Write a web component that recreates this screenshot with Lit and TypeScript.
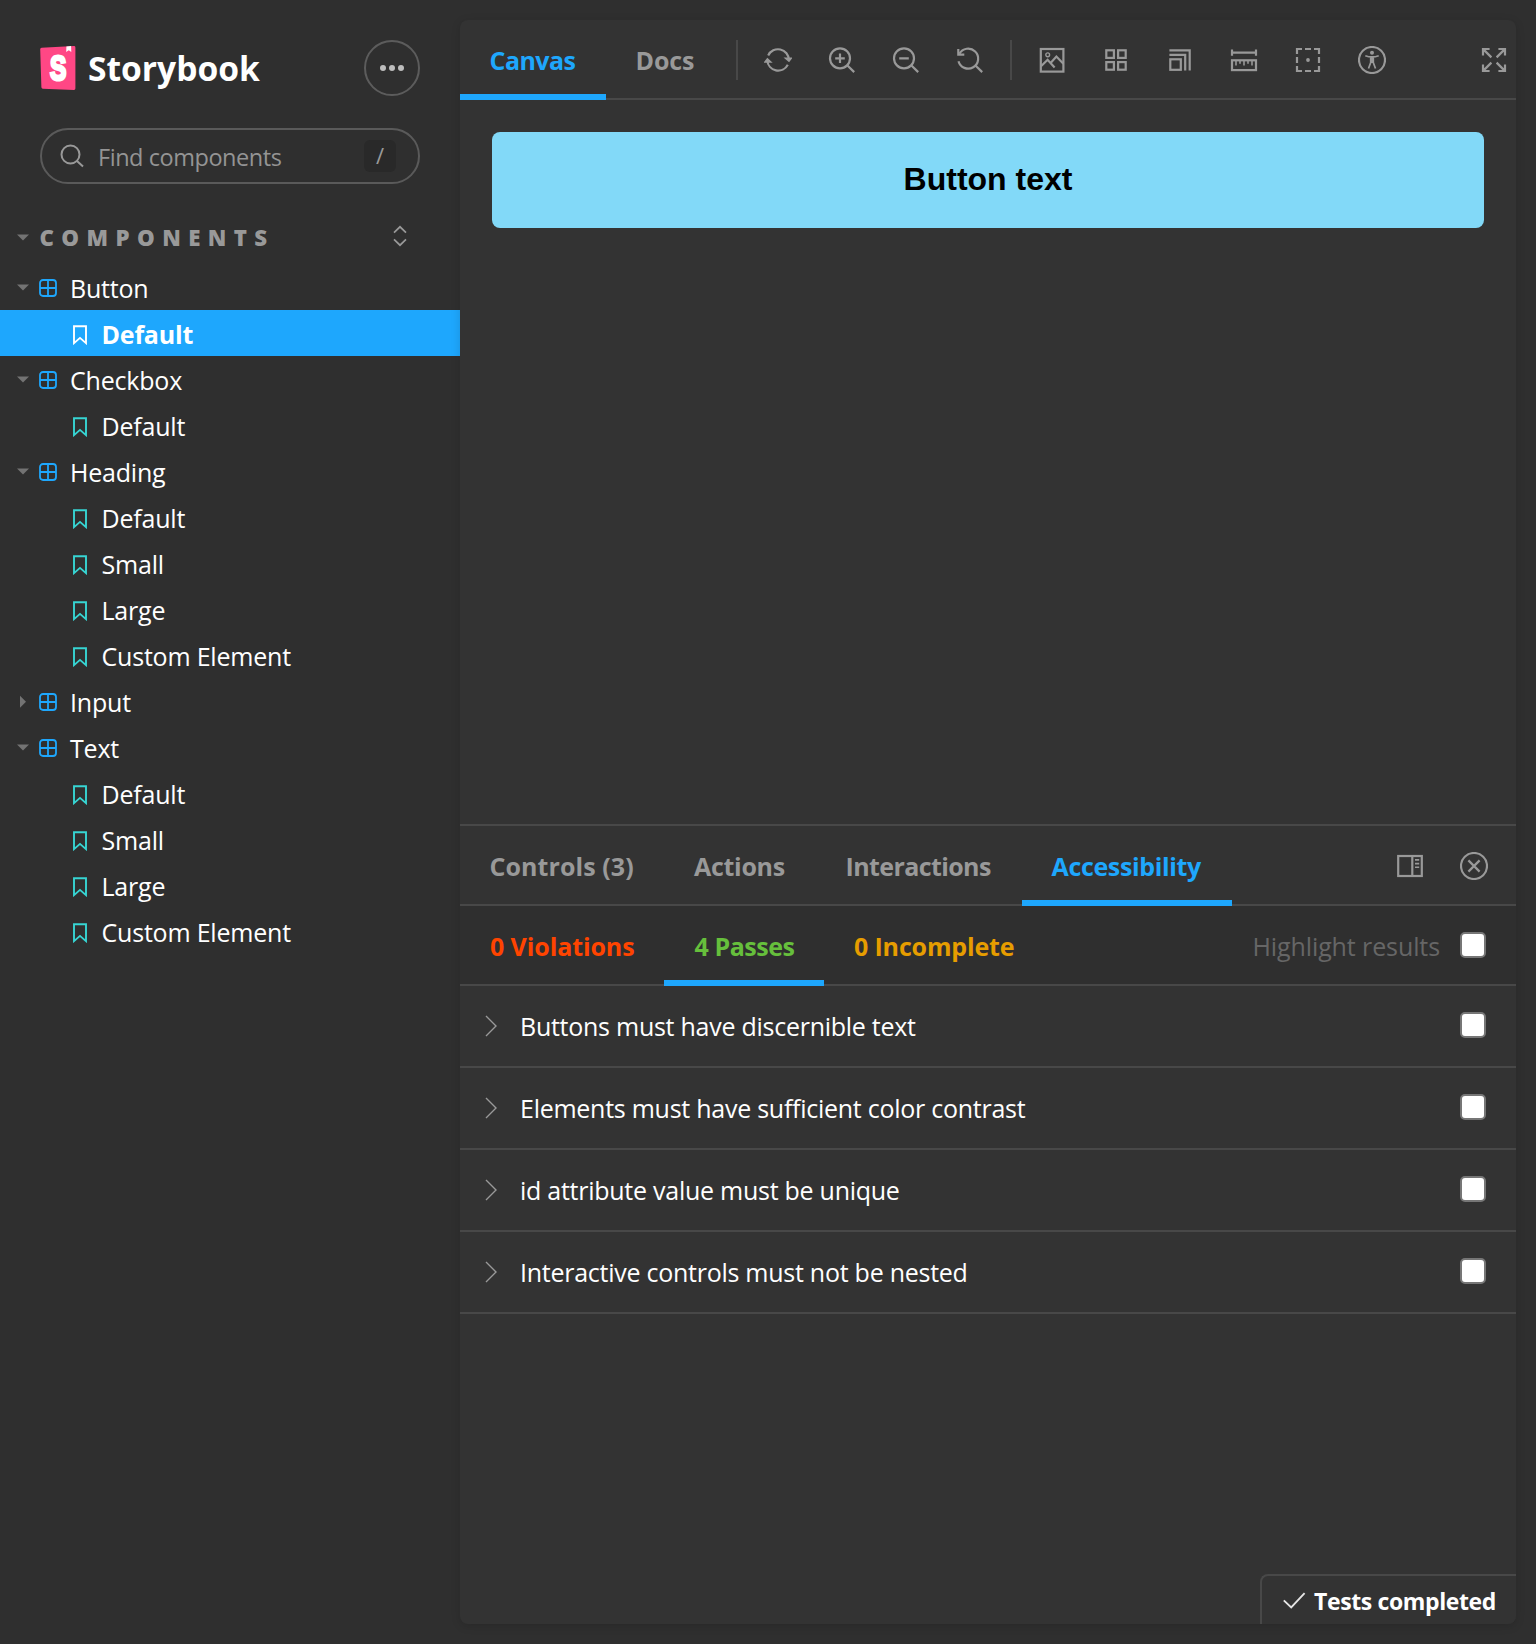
import { LitElement, html, css, svg } from "lit";
import { classMap } from "lit/directives/class-map.js";

type TreeNode = { label: string; open: boolean; stories: string[]; selected?: string };

const TREE: TreeNode[] = [
  { label: "Button", open: true, stories: ["Default"], selected: "Default" },
  { label: "Checkbox", open: true, stories: ["Default"] },
  { label: "Heading", open: true, stories: ["Default", "Small", "Large", "Custom Element"] },
  { label: "Input", open: false, stories: [] },
  { label: "Text", open: true, stories: ["Default", "Small", "Large", "Custom Element"] },
];

const RULES = [
  "Buttons must have discernible text",
  "Elements must have sufficient color contrast",
  "id attribute value must be unique",
  "Interactive controls must not be nested",
];

// Toolbar glyphs on a 28 x 28 grid
const ICONS: Record<string, unknown> = {
  sync: svg`<path d="M4.2 9.4A10.9 10.9 0 0 1 24.9 14"/><path d="M23.8 18.8A10.9 10.9 0 0 1 3.3 14.5"/><path d="M21.4 12.2h6l-2.4 3z" fill="currentColor" stroke-width="1.4"/><path d="M.9 16h6L3.4 12.8z" fill="currentColor" stroke-width="1.4"/>`,
  zoomIn: svg`<circle cx="12" cy="12.3" r="10"/><path d="M19.2 19.3l7 6.8M7.2 12.3h9.6M12 7.5v9.6"/>`,
  zoomOut: svg`<circle cx="12" cy="12.3" r="10"/><path d="M19.2 19.3l7 6.8M7.2 12.3h9.6"/>`,
  zoomReset: svg`<path d="M3.4 7.8A10 10 0 1 1 2.5 15.2"/><path d="M2.3 3v5.6h6"/><path d="M19.2 19.3l7 6.8"/>`,
  image: svg`<rect x="2.8" y="3" width="22.6" height="22.6"/><circle cx="9.7" cy="8.8" r="1.9" stroke-width="1.4"/><path d="M3 20.2l6.6-6.4 7 7.6M12.8 16.8l5.6-6.2 7 7.2"/>`,
  grid: svg`<rect x="4.3" y="4.3" width="7.6" height="7.6"/><rect x="16.1" y="4.3" width="7.6" height="7.6"/><rect x="4.3" y="16.1" width="7.6" height="7.6"/><rect x="16.1" y="16.1" width="7.6" height="7.6"/>`,
  layers: svg`<rect x="4.3" y="13.3" width="10.5" height="10.5"/><path d="M3.4 8.8h15.8v15.8M3.4 4.4h20.3v20.2"/>`,
  ruler: svg`<rect x="2" y="14.3" width="24" height="9.8"/><path d="M2 6.6h24M2 3.4v6.4M26 3.4v6.4"/><path d="M6 15v4.4M10 15v2.8M14 15v4.4M18 15v2.8M22 15v4.4" stroke-width="1.6"/>`,
  outline: svg`<path d="M3 8V3h5M20 3h5v5M25 20v5h-5M8 25H3v-5M11 3h6M11 25h6M3 11v6M25 11v6"/><circle cx="14" cy="14" r="1.9" fill="currentColor" stroke="none"/>`,
  a11y: svg`<circle cx="14" cy="14" r="13"/><circle cx="14" cy="6.8" r="2" fill="currentColor" stroke="none"/><path d="M7.3 9.7q6.7 2.5 13.4 0M12.7 11v5.5l-2.2 6M15.3 11v5.5l2.2 6" stroke-width="1.7"/><path d="M12.6 11h2.8v6h-2.8z" fill="currentColor" stroke="none"/>`,
  expand: svg`<path d="M3 9.6V3h6.6M18.4 3H25v6.6M25 18.4V25h-6.6M9.6 25H3v-6.6M3.4 3.4l8 8M24.6 3.4l-8 8M24.6 24.6l-8-8M3.4 24.6l8-8"/>`,
  sidebarRight: svg`<rect x="2.2" y="4" width="23.6" height="20"/><path d="M16.3 4v20"/><path d="M19 7.9h4.2M19 11.6h4.2M19 15.3h4.2" stroke-width="1.6"/>`,
  close: svg`<circle cx="14" cy="14" r="13"/><path d="M8.4 8.4l11.2 11.2M19.6 8.4L8.4 19.6"/>`,
};

const icon = (name: string) =>
  html`<svg class="glyph" viewBox="0 0 28 28" fill="none" stroke="currentColor" stroke-width="2.2">${ICONS[name]}</svg>`;

class SbSidebar extends LitElement {
  static styles = css`
    :host { display: block; width: 460px; flex: none; box-sizing: border-box; padding-top: 40px; color: #fff; }
    .top { display: flex; align-items: center; justify-content: space-between; height: 56px; padding: 0 40px; }
    .brand { display: flex; align-items: center; gap: 12px; font-size: 33.6px; font-weight: 700; line-height: 56px; }
    .mark { width: 36px; height: 46px; display: block; }
    .word { padding-bottom: 1px; }
    .more { box-sizing: border-box; width: 56px; height: 56px; border: 2px solid #5c5c5c; border-radius: 50%; display: flex; align-items: center; justify-content: center; gap: 2.2px; }
    .more i { width: 6.8px; height: 6.8px; border-radius: 50%; background: #bdbdbd; }
    .search { box-sizing: border-box; height: 56px; margin: 32px 40px 0; padding: 0 22px 0 18px; border: 2px solid #5a5a5a; border-radius: 28px; display: flex; align-items: center; color: #999; }
    .search svg { width: 24px; height: 24px; display: block; }
    .hint { flex: 1; padding: 1px 0 0 14px; font-size: 23.5px; letter-spacing: -0.45px; color: #949494; }
    .key { width: 32px; height: 32px; border-radius: 6px; background: #292929; font-size: 22px; line-height: 31px; text-align: center; }
    .heading { display: flex; align-items: center; height: 40px; margin-top: 34px; padding: 0 52px 0 16px; color: #999; }
    .heading span { flex: 1; padding: 0 0 0 9.5px; font-size: 22.3px; font-weight: 800; letter-spacing: 7.4px; line-height: 40px; }
    .updown { width: 16px; height: 22px; display: block; margin-top: -5px; }
    .tri { width: 14px; height: 14px; flex: none; display: block; margin-top: -1px; fill: #737373; }
    .tree { margin-top: 6px; }
    .row { box-sizing: border-box; height: 46px; padding: 3px 0 0 16px; display: flex; align-items: center; font-size: 25px; line-height: 43px; letter-spacing: -0.2px; }
    .comp { width: 18px; height: 18px; margin: -1px 13px 0 9px; display: block; color: #1ea7fd; }
    .story { padding-left: 73px; }
    .story svg { width: 14px; height: 20px; margin-right: 14.5px; display: block; color: #37d5d3; }
    .selected { background: #1ea7fd; font-weight: 700; }
    .selected svg { color: #fff; }
  `;

  private triangle(open: boolean) {
    return html`<svg class="tri" viewBox="0 0 14 14"><path d=${open ? "M1 3.5h12L7 9.5z" : "M4 .8v12l6-6z"} /></svg>`;
  }

  render() {
    return html`
      <div class="top">
        <div class="brand">
          <svg class="mark" viewBox="0 0 36 46">
            <path d="M1.6 2.8L34 1q1.4 0 1.4 1.4v41.2q0 1.4-1.4 1.4L2.8 43.7q-1.3-.1-1.4-1.4L.2 4.3q0-1.4 1.4-1.5z" fill="#ff4785" />
            <path d="M26.4 1.4l4.7-.3.2 6-2.5-1.8-2.6 1.7z" fill="#fff" />
            <text x="0" y="0" transform="translate(18.2 35.2) scale(.7 1)" text-anchor="middle" font-family="Liberation Sans, sans-serif" font-weight="700" font-size="35" fill="#fff" stroke="#fff" stroke-width="3">S</text>
          </svg>
          <span class="word">Storybook</span>
        </div>
        <div class="more"><i></i><i></i><i></i></div>
      </div>
      <div class="search">
        <svg viewBox="0 0 24 24" fill="none" stroke="currentColor" stroke-width="2"><circle cx="10.5" cy="10.5" r="9" /><path d="M17 17l6 5.6" /></svg>
        <span class="hint">Find components</span>
        <span class="key">/</span>
      </div>
      <div class="heading">
        ${this.triangle(true)}<span>COMPONENTS</span>
        <svg class="updown" viewBox="0 0 16 22" fill="none" stroke="currentColor" stroke-width="1.7"><path d="M2 7.6l6-5.8 6 5.8M2 14.4l6 5.8 6-5.8" /></svg>
      </div>
      <div class="tree">
        ${TREE.map((node) => html`
          <div class="row">
            ${this.triangle(node.open)}
            <svg class="comp" viewBox="0 0 18 18" fill="none" stroke="currentColor" stroke-width="1.8"><rect x="1" y="1" width="16" height="16" rx="3" /><path d="M9 1v16M1 9h16" /></svg>
            <span>${node.label}</span>
          </div>
          ${node.stories.map((story) => html`
            <div class=${classMap({ row: true, story: true, selected: node.selected === story })}>
              <svg viewBox="0 0 14 20" fill="none" stroke="currentColor" stroke-width="1.9"><path d="M1 1.3h12v16.8L7 12.9 1 18.1z" /></svg>
              <span>${story}</span>
            </div>`)}
        `)}
      </div>
    `;
  }
}
customElements.define("sb-sidebar", SbSidebar);

class AppRoot extends LitElement {
  static styles = css`
    :host { display: flex; box-sizing: border-box; width: 1536px; height: 1644px; background: #2f2f2f; font-family: "Open Sans", "Noto Sans", sans-serif; color: #fff; overflow: hidden; }
    .panel { box-sizing: border-box; width: 1056px; height: 1604px; margin-top: 20px; border-radius: 8px; background: #333; box-shadow: 0 2px 10px rgba(0, 0, 0, 0.14); display: flex; flex-direction: column; overflow: hidden; position: relative; }
    .bar { flex: none; display: flex; align-items: center; height: 80px; box-shadow: inset 0 -2px #484848; color: #999; }
    .bar.sub { background: #2f2f2f; }
    .tab { box-sizing: border-box; height: 80px; padding-left: 29.5px; font-size: 25px; font-weight: 700; line-height: 80px; white-space: nowrap; flex: none; }
    .tab.active { box-shadow: inset 0 -6px #1ea7fd; }
    .accent { color: #1ea7fd; }
    .red { color: #ff4400; }
    .green { color: #66bf3c; }
    .gold { color: #e69d00; }
    .canvas { width: 146px; letter-spacing: -0.55px; }
    .docs { width: 118px; letter-spacing: -0.1px; }
    .controls { width: 204px; letter-spacing: 0.08px; }
    .actions { width: 151px; letter-spacing: -0.3px; padding-left: 30px; }
    .interactions { width: 207px; letter-spacing: -0.6px; padding-left: 30.5px; }
    .accessibility { width: 210px; letter-spacing: -0.35px; }
    .violations { width: 204px; letter-spacing: -0.1px; padding-left: 30px; }
    .passes { width: 160px; letter-spacing: -0.45px; padding-left: 30.5px; }
    .incomplete { width: 220px; letter-spacing: -0.15px; padding-left: 30px; }
    .sep { width: 2px; height: 40px; margin: 0 12px; background: #484848; }
    .tools { display: flex; gap: 8px; }
    .tool { width: 56px; display: flex; justify-content: center; }
    .glyph { width: 28px; height: 28px; display: block; }
    .grow { flex: 1; }
    .full { margin-right: 8px; }
    .side { display: flex; gap: 36px; margin-right: 28px; }
    .preview { box-sizing: border-box; height: 724px; padding: 32px; flex: none; }
    .demo { display: block; box-sizing: border-box; width: 992px; height: 96px; border: 0; border-radius: 8px; background: #82d9f8; color: #000; font: 700 32px/92px "Liberation Sans", sans-serif; padding: 0 0 2px; text-align: center; }
    .addons { border-top: 2px solid #484848; }
    .highlight { font-size: 25px; color: #666; margin-right: 20px; letter-spacing: -0.1px; }
    .box { box-sizing: border-box; width: 26px; height: 26px; margin: -2px 30px 0 0; border: 2px solid #767676; border-radius: 5px; background: #fff; }
    .rule { display: flex; align-items: center; height: 80px; border-bottom: 2px solid #484848; font-size: 25px; letter-spacing: -0.26px; }
    .chev { width: 14px; height: 22px; margin: 0 22px 0 24px; display: block; }
    .status { position: absolute; right: 0; bottom: 0; box-sizing: border-box; width: 256px; height: 50px; border: solid #484848; border-width: 2px 0 0 2px; border-radius: 8px 0 0 0; background: #333; display: flex; align-items: center; padding: 2px 0 0 20px; font-size: 23px; font-weight: 700; letter-spacing: -0.38px; white-space: nowrap; }
    .status svg { width: 24px; height: 20px; margin: -2px 8px 0 0; display: block; }
  `;

  private tab(label: string, cls: string, active = false, tone = "") {
    return html`<div class="tab ${cls} ${tone} ${active ? "active" : ""}">${label}</div>`;
  }

  private tools(names: string[]) {
    return html`<div class="tools">${names.map((n) => html`<div class="tool">${icon(n)}</div>`)}</div>`;
  }

  render() {
    return html`
      <sb-sidebar></sb-sidebar>
      <main class="panel">
        <div class="bar">
          ${this.tab("Canvas", "canvas", true, "accent")}
          ${this.tab("Docs", "docs")}
          <div class="sep"></div>
          ${this.tools(["sync", "zoomIn", "zoomOut", "zoomReset"])}
          <div class="sep"></div>
          ${this.tools(["image", "grid", "layers", "ruler", "outline", "a11y"])}
          <div class="grow"></div>
          <div class="full">${icon("expand")}</div>
        </div>
        <section class="preview"><button class="demo">Button text</button></section>
        <section class="addons">
          <div class="bar">
            ${this.tab("Controls (3)", "controls")}
            ${this.tab("Actions", "actions")}
            ${this.tab("Interactions", "interactions")}
            ${this.tab("Accessibility", "accessibility", true, "accent")}
            <div class="grow"></div>
            <div class="side">${icon("sidebarRight")}${icon("close")}</div>
          </div>
          <div class="bar sub">
            ${this.tab("0 Violations", "violations", false, "red")}
            ${this.tab("4 Passes", "passes", true, "green")}
            ${this.tab("0 Incomplete", "incomplete", false, "gold")}
            <div class="grow"></div>
            <span class="highlight">Highlight results</span>
            <div class="box"></div>
          </div>
          ${RULES.map((rule) => html`
            <div class="rule">
              <svg class="chev" viewBox="0 0 14 22" fill="none" stroke="#999" stroke-width="1.4"><path d="M2 1l10 10L2 21" /></svg>
              <span>${rule}</span>
              <div class="grow"></div>
              <div class="box"></div>
            </div>`)}
        </section>
        <div class="status">
          <svg viewBox="0 0 24 20" fill="none" stroke="#e4e4e4" stroke-width="1.9"><path d="M1.8 10.4l7.4 7L22.6 3.2" /></svg>
          <span>Tests completed</span>
        </div>
      </main>
    `;
  }
}
customElements.define("app-root", AppRoot);
